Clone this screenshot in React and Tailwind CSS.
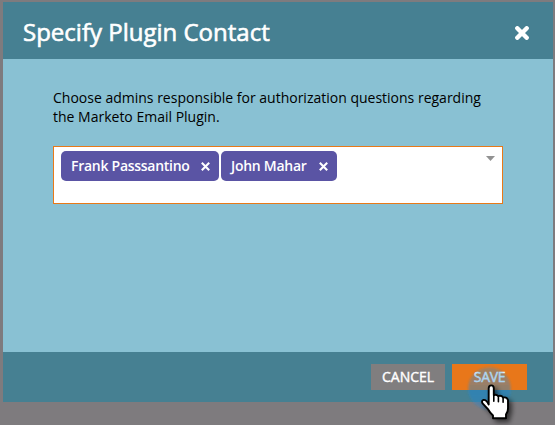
function CloseIcon({ className }) {
  return (
    <svg viewBox="0 0 14 14" className={className} fill="none" stroke="white" strokeWidth="4.4" strokeLinecap="round">
      <path d="M2.3 2.3 L11.7 11.7 M11.7 2.3 L2.3 11.7" />
    </svg>
  );
}

function Tag({ name, className }) {
  return (
    <div className={`flex h-[30px] items-center justify-between rounded-[5px] bg-[#5a54a4] pl-2.5 pr-[9px] ${className}`}>
      <span className="whitespace-nowrap text-[14px] font-semibold leading-[30px] tracking-[-0.27px] text-white">{name}</span>
      <svg viewBox="0 0 9 9" className="h-[9px] w-[9px]" stroke="white" strokeWidth="2.1">
        <path d="M0.8 0.8 L8.2 8.2 M8.2 0.8 L0.8 8.2" />
      </svg>
    </div>
  );
}

function Pointer() {
  return (
    <svg viewBox="0 0 75 65" className="absolute left-[460px] top-[360px] h-[65px] w-[75px]">
      <defs>
        <linearGradient id="halo" x1="0" y1="0" x2="0" y2="1">
          <stop offset="0" stopColor="#2490e0" stopOpacity="0.33" />
          <stop offset="0.6" stopColor="#1f86d8" stopOpacity="0.44" />
          <stop offset="1" stopColor="#1f86d8" stopOpacity="0.34" />
        </linearGradient>
        <filter id="shadow" x="-50%" y="-50%" width="200%" height="200%">
          <feDropShadow dx="3" dy="3" stdDeviation="2.5" floodColor="#000" floodOpacity="0.6" />
        </filter>
        <filter id="soft" x="-20%" y="-20%" width="140%" height="140%">
          <feGaussianBlur stdDeviation="0.9" />
        </filter>
      </defs>
      <circle cx="29.5" cy="28.5" r="21.3" fill="url(#halo)" filter="url(#soft)" />
      <g filter="url(#shadow)" strokeLinejoin="round" strokeLinecap="round" stroke="#000">
        <path
          d="M28.7 44.5 V28.3 Q28.7 25.4 31.3 25.4 Q33.8 25.4 33.8 28.3 V35.2 Q36.2 34 38.2 36.2 Q41.2 35 43.2 37.6 Q46.6 36.6 48 40 V48.4 Q48 52 46 54.4 V58.3 H33 V55.5 Q29.7 52.5 27.7 48.8 L22.6 43.4 Q21.2 41 23.2 40 Q26 39.2 28.7 44.5 Z"
          fill="white"
          strokeWidth="1.9"
        />
        <path d="M33.8 35 V41.2 M38.4 36.5 V41.7 M43.1 38 V42.2" fill="none" strokeWidth="1.6" />
      </g>
    </svg>
  );
}

export default function App() {
  return (
    <div className="relative h-[425px] w-[555px] overflow-hidden bg-[#7e7b7e] pl-[3px] pt-0.5 font-['Open_Sans',sans-serif]">
      <div className="flex h-[400px] w-[550px] flex-col bg-[#89c1d3]">
        <header className="flex h-[57px] shrink-0 items-center justify-between bg-[#468092] pl-5 pr-6">
          <h1 className="mt-[3px] whitespace-nowrap text-[24px] leading-8 text-white [-webkit-text-stroke:0.6px_white]">Specify Plugin Contact</h1>
          <CloseIcon className="mt-[5px] h-3.5 w-3.5" />
        </header>
        <main className="flex-1 px-[50px] pt-[29px]">
          <p className="whitespace-nowrap text-[14px] leading-[19px] text-black">
            Choose admins responsible for authorization questions regarding
            <br />
            the Marketo Email Plugin.
          </p>
          <div className="mt-5 flex h-[58px] w-[450px] items-start gap-0.5 border border-[#e87919] bg-white pl-[7px] pr-[7px] pt-1">
            <Tag name="Frank Passsantino" className="w-[158px]" />
            <Tag name="John Mahar" className="w-[116px]" />
            <svg viewBox="0 0 9 5" className="ml-auto mt-[5px] h-[5px] w-[9px]" fill="#929292">
              <path d="M0 0 H9 L4.5 5 Z" />
            </svg>
          </div>
        </main>
        <footer className="flex h-[50px] shrink-0 items-center justify-end gap-[7px] bg-[#468092] pr-[26px] text-[14px] text-white [-webkit-text-stroke:0.4px_white]">
          <button className="h-[26px] w-[74px] bg-[#807e7f] leading-[26px] tracking-[-0.05px]">CANCEL</button>
          <button className="h-[26px] w-[75px] bg-[#e8771a] leading-[26px] tracking-[-0.3px]">SAVE</button>
        </footer>
      </div>
      <Pointer />
    </div>
  );
}
